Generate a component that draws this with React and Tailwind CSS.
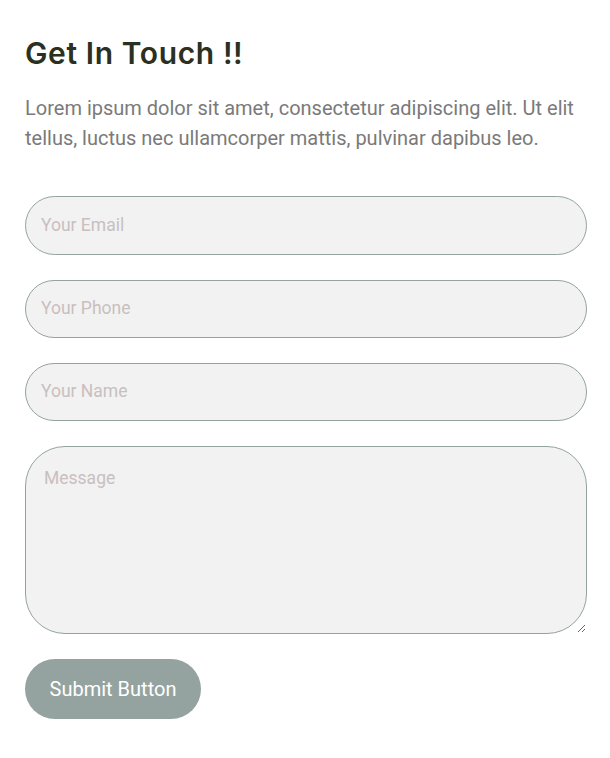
export default function App() {
  return (
    <div className="min-h-[758px] bg-white px-[25px] pt-[33px] font-['Roboto',sans-serif]">
      <h2 className="text-[30px] font-semibold leading-[40px] tracking-[0.6px] text-[#2a3022] font-['Inter',sans-serif]">
        Get In Touch !!
      </h2>
      <p className="mt-[20px] w-[560px] text-[20px] leading-[30px] text-[#7a7a7a]">
        Lorem ipsum dolor sit amet, consectetur adipiscing elit. Ut elit tellus, luctus nec ullamcorper mattis, pulvinar dapibus leo.
      </p>
      <form className="mt-[43px] flex w-[562px] flex-col gap-[25px]">
        <input
          type="email"
          placeholder="Your Email"
          className="h-[59px] rounded-full border border-[#94a3a0] bg-[#f2f2f2] px-[15px] pb-[2px] text-[17.5px] text-[#555] outline-none placeholder:text-[#c9bfbf]"
        />
        <input
          type="tel"
          placeholder="Your Phone"
          className="h-[58px] rounded-full border border-[#94a3a0] bg-[#f2f2f2] px-[15px] pb-[2px] text-[17.5px] text-[#555] outline-none placeholder:text-[#c9bfbf]"
        />
        <input
          type="text"
          placeholder="Your Name"
          className="h-[58px] rounded-full border border-[#94a3a0] bg-[#f2f2f2] px-[15px] pb-[2px] text-[17.5px] text-[#555] outline-none placeholder:text-[#c9bfbf]"
        />
        <textarea
          placeholder="Message"
          className="h-[188px] rounded-[40px] border border-[#94a3a0] bg-[#f2f2f2] px-[18px] pt-[19px] pb-[20px] text-[17.5px] leading-[24px] text-[#555] outline-none placeholder:text-[#c9bfbf]"
        />
        <div>
          <button
            type="button"
            className="h-[60px] w-[176px] rounded-full bg-[#94a3a0] text-[20px] text-white"
          >
            Submit Button
          </button>
        </div>
      </form>
    </div>
  );
}
